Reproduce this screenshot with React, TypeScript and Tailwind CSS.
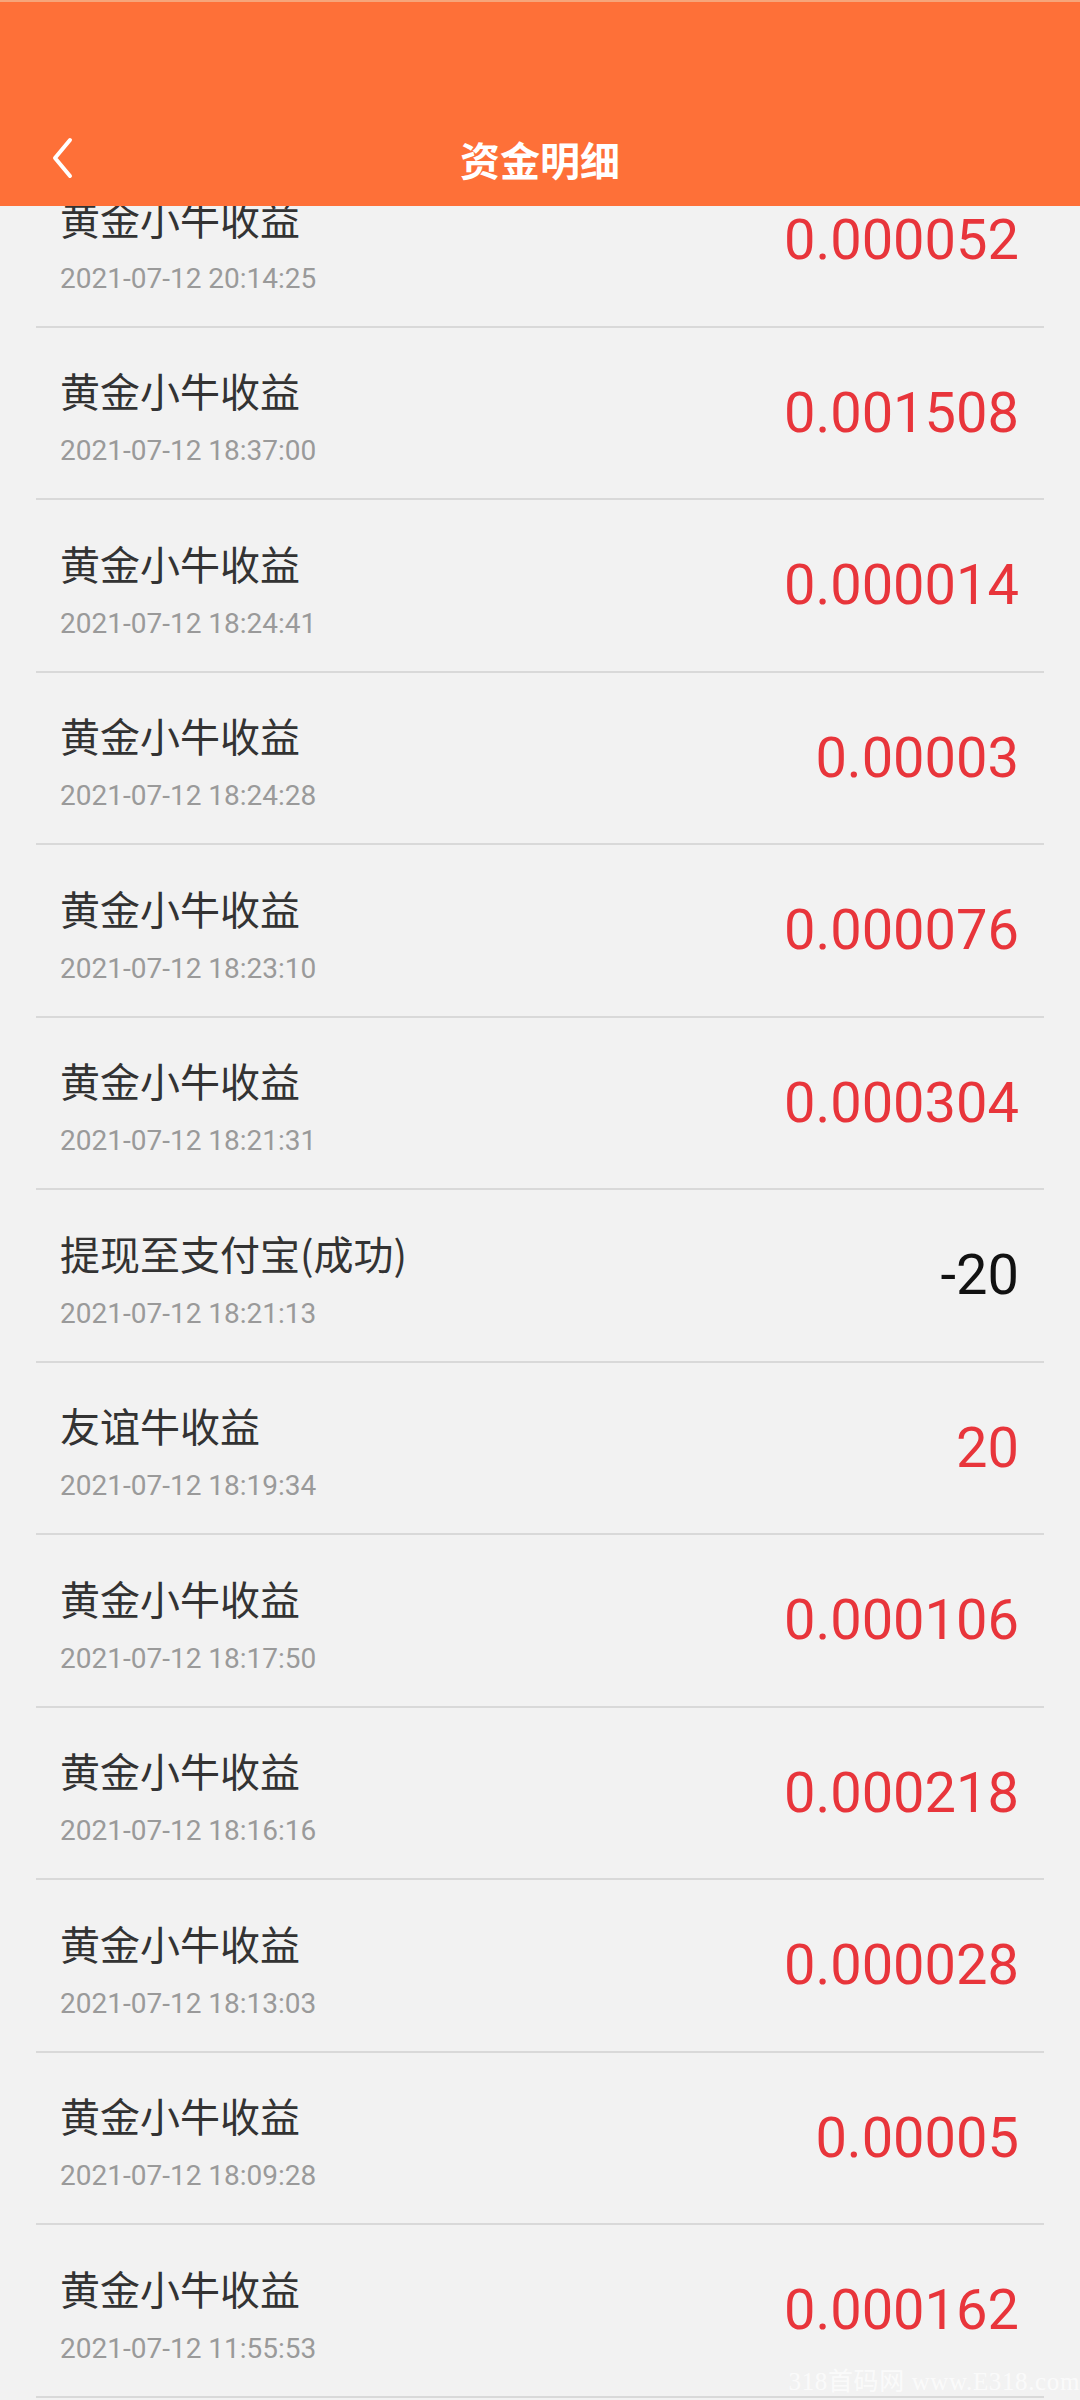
import React from "react";

type Record = { title: string; time: string; amount: string; negative?: boolean };

const records: Record[] = [
  { title: "黄金小牛收益", time: "2021-07-12 20:14:25", amount: "0.000052" },
  { title: "黄金小牛收益", time: "2021-07-12 18:37:00", amount: "0.001508" },
  { title: "黄金小牛收益", time: "2021-07-12 18:24:41", amount: "0.000014" },
  { title: "黄金小牛收益", time: "2021-07-12 18:24:28", amount: "0.00003" },
  { title: "黄金小牛收益", time: "2021-07-12 18:23:10", amount: "0.000076" },
  { title: "黄金小牛收益", time: "2021-07-12 18:21:31", amount: "0.000304" },
  { title: "提现至支付宝(成功)", time: "2021-07-12 18:21:13", amount: "-20", negative: true },
  { title: "友谊牛收益", time: "2021-07-12 18:19:34", amount: "20" },
  { title: "黄金小牛收益", time: "2021-07-12 18:17:50", amount: "0.000106" },
  { title: "黄金小牛收益", time: "2021-07-12 18:16:16", amount: "0.000218" },
  { title: "黄金小牛收益", time: "2021-07-12 18:13:03", amount: "0.000028" },
  { title: "黄金小牛收益", time: "2021-07-12 18:09:28", amount: "0.00005" },
  { title: "黄金小牛收益", time: "2021-07-12 11:55:53", amount: "0.000162" },
];

const cjk = { fontFamily: '"Noto Sans CJK SC", "Noto Sans", sans-serif' };
const num = { fontFamily: 'Roboto, "Noto Sans CJK SC", sans-serif' };

function Header() {
  return (
    <div className="relative z-10 bg-[#fe7038] pt-[110px] border-t-2 border-[#f6a57a]">
      <div className="relative flex h-[94px] items-center justify-center">
        <button className="absolute left-[44px] top-[20px] p-1">
          <svg width="28" height="44" viewBox="0 0 28 44" fill="none">
            <polyline points="22,4 7,22 22,40" stroke="#fff" strokeWidth="4" strokeLinecap="round" strokeLinejoin="round" />
          </svg>
        </button>
        <h1 className="text-[40px] font-bold text-white leading-none" style={cjk}>
          资金明细
        </h1>
      </div>
    </div>
  );
}

function RecordRow({ record }: { record: Record }) {
  return (
    <div className="mx-[36px] flex h-[172.5px] items-center justify-between border-b-2 border-[#d9d9d9] pl-[24px] pr-[25px]">
      <div className="mt-[10px] flex flex-col">
        <p className="text-[40px] leading-none text-[#333333]" style={cjk}>
          {record.title}
        </p>
        <p className="mt-[27px] text-[28px] leading-none text-[#9a9a9a]" style={num}>
          {record.time}
        </p>
      </div>
      <p
        className={`text-[56px] leading-none ${record.negative ? "text-[#111111]" : "text-[#e8353b]"}`}
        style={num}
      >
        {record.amount}
      </p>
    </div>
  );
}

export default function App() {
  return (
    <div className="relative h-[2400px] w-[1080px] overflow-hidden bg-[#f2f2f2]">
      <Header />
      <div className="-mt-[51px]">
        {records.map((r, i) => (
          <RecordRow key={i} record={r} />
        ))}
      </div>
      <div
        className="absolute bottom-[6px] right-0 text-[25px] leading-none text-white/70 tracking-wide"
        style={{ fontFamily: '"Liberation Serif", "Noto Sans CJK SC", serif' }}
      >
        318首码网 www.E318.com
      </div>
    </div>
  );
}
